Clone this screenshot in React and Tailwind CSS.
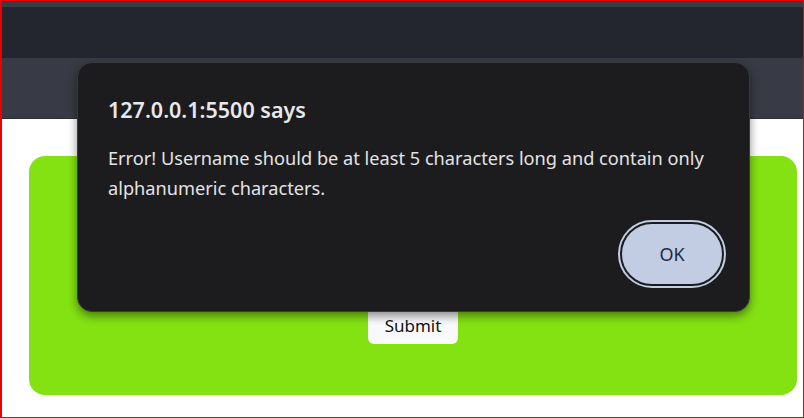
import React from 'react';

const font = { fontFamily: '"Noto Sans", "Open Sans", sans-serif' };

const App = () => {
  return (
    <div
      className="relative w-[804px] h-[418px] overflow-hidden bg-white border-t border-r border-b border-l-2 border-[#ee0000]"
      style={font}
    >
      {/* page header */}
      <div className="flex flex-col">
        <div className="h-[6px] bg-[#393c45]" />
        <div className="h-[51px] bg-[#23262f]" />
        <div className="h-[61px] bg-[#383b45] border-b border-[#2c2e35]" />
      </div>

      {/* form card */}
      <div className="pl-[27px] pt-[37px]">
        <div className="w-[768px] h-[239px] rounded-[16px] bg-[#84e112] flex flex-col items-center justify-end pb-[51px]">
          <button className="h-[37px] px-[17px] rounded-[6px] bg-[#f8f9fa] text-[17px] text-[#111]">
            Submit
          </button>
        </div>
      </div>

      {/* alert dialog */}
      <div className="absolute left-[75px] top-[61px] w-[673px] h-[250px] rounded-[15px] bg-[#1c1c1e] border border-[#3a3a3d] shadow-[0_4px_10px_rgba(0,0,0,0.45)] flex flex-col pl-[30px] pr-[25px] pt-[33px]">
        <h1 className="text-[21.5px] leading-[28px] font-semibold text-[#e8e8ea]">127.0.0.1:5500 says</h1>
        <p className="mt-[19px] text-[18.2px] leading-[30px] text-[#e3e3e5]">
          Error! Username should be at least 5 characters long and contain only alphanumeric characters.
        </p>
        <div className="flex justify-end mt-auto pb-[25px]">
          <button className="w-[104px] h-[64px] rounded-full bg-[#c2cce3] border-[2.5px] border-[#1c1c1e] outline-2 outline-[#c2cce3] text-[18px] text-[#1e2a47]">
            OK
          </button>
        </div>
      </div>
    </div>
  );
};

export default App;
